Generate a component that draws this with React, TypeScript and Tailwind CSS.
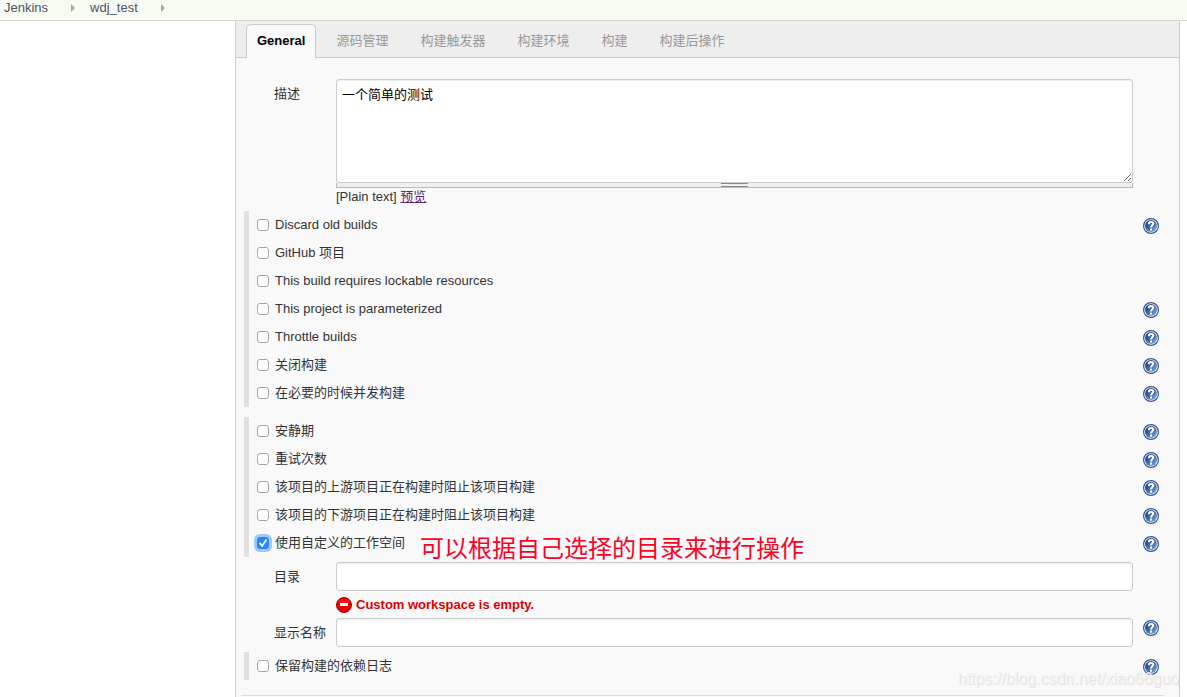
import { useState } from "react";
import type { ReactNode } from "react";

const TABS = ["源码管理", "构建触发器", "构建环境", "构建", "构建后操作"];

type Option = { id: string; label: string; help: boolean; checked?: boolean; note?: string };

const GENERAL_OPTIONS: Option[] = [
  { id: "discard", label: "Discard old builds", help: true },
  { id: "github", label: "GitHub 项目", help: false },
  { id: "lockable", label: "This build requires lockable resources", help: false },
  { id: "params", label: "This project is parameterized", help: true },
  { id: "throttle", label: "Throttle builds", help: true },
  { id: "disable", label: "关闭构建", help: true },
  { id: "concurrent", label: "在必要的时候并发构建", help: true },
];

const ADVANCED_OPTIONS: Option[] = [
  { id: "quiet", label: "安静期", help: true },
  { id: "retry", label: "重试次数", help: true },
  { id: "upstream", label: "该项目的上游项目正在构建时阻止该项目构建", help: true },
  { id: "downstream", label: "该项目的下游项目正在构建时阻止该项目构建", help: true },
  {
    id: "workspace",
    label: "使用自定义的工作空间",
    help: true,
    checked: true,
    note: "可以根据自己选择的目录来进行操作",
  },
];

const LOG_OPTIONS: Option[] = [{ id: "deplog", label: "保留构建的依赖日志", help: true }];

function HelpButton() {
  return (
    <button type="button" aria-label="Help" className="block size-4 shrink-0">
      <svg viewBox="0 0 16 16" className="size-4">
        <defs>
          <linearGradient id="help-fill" x1="0" y1="0" x2="1" y2="1">
            <stop offset="0.2" stopColor="#1d4488" />
            <stop offset="1" stopColor="#86aedb" />
          </linearGradient>
        </defs>
        <circle cx="8" cy="8" r="7.4" fill="#fff" stroke="#2f5596" strokeWidth="1.2" />
        <circle cx="8" cy="8" r="6" fill="url(#help-fill)" />
        <path
          d="M5.9 6.3V5.6C5.9 4.5 6.8 4 8 4c1.3 0 2.2.6 2.2 1.6C10.2 7.2 8 7.2 8 9.6"
          fill="none"
          stroke="#fff"
          strokeWidth="2"
        />
        <rect x="7" y="10.6" width="2" height="2" fill="#fff" />
      </svg>
    </button>
  );
}

function Crumb({ children }: { children: ReactNode }) {
  return (
    <li className="flex items-center">
      <a href="#" className="text-[#4d545d]">
        {children}
      </a>
      <svg viewBox="0 0 4 8" className="ml-[23px] mr-[15px] h-2 w-1">
        <path d="M0 0L4 4L0 8Z" fill="#aaa" />
      </svg>
    </li>
  );
}

function OptionRow({ option }: { option: Option }) {
  const [checked, setChecked] = useState(option.checked ?? false);
  return (
    <div className="relative flex h-7 items-center pl-2 pr-5">
      <span className="relative mr-1.5 block size-3">
        <input
          id={option.id}
          type="checkbox"
          checked={checked}
          onChange={(e) => setChecked(e.target.checked)}
          className="block size-3 appearance-none rounded-[3px] border border-[#a6a6a6] bg-white checked:border-[#2a87f8] checked:bg-[#2a87f8] checked:ring-3 checked:ring-[#9cc8fb]"
        />
        {checked && (
          <svg viewBox="0 0 12 12" className="pointer-events-none absolute inset-0 size-3">
            <path d="M3 6.4L5.2 8.8L9 3.2" fill="none" stroke="#fff" strokeWidth="1.7" strokeLinecap="round" />
          </svg>
        )}
      </span>
      <label htmlFor={option.id}>{option.label}</label>
      {option.note && (
        <span className="absolute left-[171px] top-1 whitespace-nowrap text-2xl leading-8 text-[#ff0026]">
          {option.note}
        </span>
      )}
      {option.help && (
        <span className="ml-auto pt-0.5">
          <HelpButton />
        </span>
      )}
    </div>
  );
}

function OptionGroup({ options }: { options: Option[] }) {
  return (
    <div className="ml-2 border-l-[5px] border-[#e0e0e0]">
      {options.map((option) => (
        <OptionRow key={option.id} option={option} />
      ))}
    </div>
  );
}

function Field({ id, label, help, children }: { id: string; label: string; help?: boolean; children: ReactNode }) {
  return (
    <div className="flex items-start pl-[38px] pr-5">
      <label htmlFor={id} className="w-[62px] shrink-0 pt-[5px]">
        {label}
      </label>
      <div className="min-w-0 flex-1">{children}</div>
      <div className="ml-2.5 w-4 shrink-0 pt-0.5">{help && <HelpButton />}</div>
    </div>
  );
}

const INPUT =
  "block h-[29px] w-full rounded-[3px] border border-[#ccc] bg-white px-1.5 text-black shadow-[inset_0_1px_1px_rgba(0,0,0,0.075)] outline-none";

export default function App() {
  return (
    <div className="relative flex min-h-screen flex-col bg-white font-['Liberation_Sans','Noto_Sans_CJK_SC',sans-serif] text-[13px] leading-5 text-[#333]">
      <nav aria-label="Breadcrumb" className="border-b border-[#d3d9cd] bg-[#f5faf3]">
        <ul className="flex h-5 items-center pb-1 pl-1">
          <Crumb>Jenkins</Crumb>
          <Crumb>wdj_test</Crumb>
        </ul>
      </nav>

      <div className="flex flex-1">
        <aside className="w-[235px] shrink-0" />
        <main className="mr-[7px] min-w-0 flex-1 border-x border-[#ccc] bg-[#f9f9f9]">
          <div role="tablist" className="flex border-b border-[#ccc] bg-[#eee] pl-2.5 pt-[3px]">
            <button
              type="button"
              role="tab"
              aria-selected="true"
              className="-mb-px mr-1 h-[34px] rounded-t-[5px] border border-b-0 border-[#ccc] bg-[#f9f9f9] px-2.5 pb-0.5 font-bold text-black"
            >
              General
            </button>
            {TABS.map((tab) => (
              <button key={tab} type="button" role="tab" aria-selected="false" className="h-[33px] px-4 text-[#999]">
                {tab}
              </button>
            ))}
          </div>

          <form className="pt-[21px]">
            <Field id="description" label="描述">
              <textarea
                id="description"
                defaultValue="一个简单的测试"
                className="block h-[104px] w-full resize rounded-[3px] border border-[#ccc] bg-white px-[5px] py-[5px] text-black shadow-[inset_0_1px_1px_rgba(0,0,0,0.075)] outline-none"
              />
              <div className="flex h-[5px] items-center justify-center border border-t-0 border-[#bbb] bg-[#eee]">
                <span className="h-1 w-[27px] border-y border-[#888]" />
              </div>
              <div className="pb-[5px] leading-[18px] text-[#333]">
                [Plain text]{" "}
                <a href="#" className="text-[#5c2470] underline">
                  预览
                </a>
              </div>
            </Field>

            <OptionGroup options={GENERAL_OPTIONS} />
            <div className="h-2.5" />
            <OptionGroup options={ADVANCED_OPTIONS} />

            <div className="flex flex-col py-[5px]">
              <Field id="directory" label="目录">
                <input id="directory" type="text" className={INPUT} />
                <p className="flex h-[27px] items-center font-bold text-[#d00]">
                  <svg viewBox="0 0 16 16" className="mr-1 size-4">
                    <circle cx="8" cy="8" r="7.5" fill="#e60000" stroke="#a80000" />
                    <path d="M1.8 6.5A6.4 6.4 0 0 1 14.2 6.5Z" fill="#f22" opacity="0.6" />
                    <rect x="4" y="6" width="8" height="3" fill="#fff" />
                  </svg>
                  Custom workspace is empty.
                </p>
              </Field>
              <Field id="display-name" label="显示名称" help>
                <input id="display-name" type="text" className={INPUT} />
              </Field>
            </div>

            <OptionGroup options={LOG_OPTIONS} />
            <hr className="ml-[5px] mr-[15px] mt-[15px] border-[#ddd]" />
          </form>
        </main>
      </div>

      <div className="pointer-events-none absolute bottom-1.5 right-2 text-base leading-6 text-[#f4f4f4]/80 [text-shadow:1px_1px_1px_#ddd]">
        https://blog.csdn.net/xiao66guo
      </div>
    </div>
  );
}
